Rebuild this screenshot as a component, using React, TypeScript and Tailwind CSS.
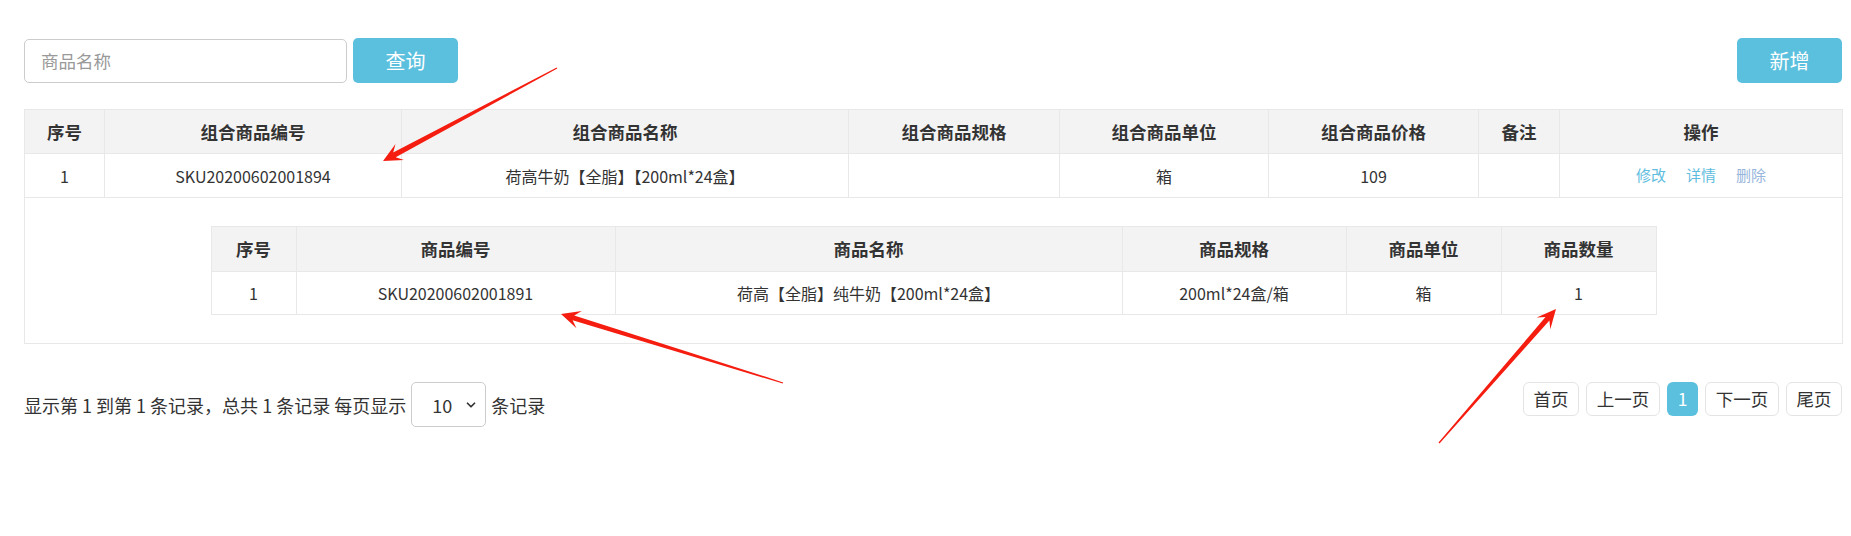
import React from "react";
import { ChevronDown } from "lucide-react";

function arrowPoints(tx: number, ty: number, px: number, py: number) {
  const dx = px - tx;
  const dy = py - ty;
  const len = Math.hypot(dx, dy);
  const ux = dx / len;
  const uy = dy / len;
  const nx = -uy;
  const ny = ux;
  const pt = (x: number, y: number) => `${x.toFixed(1)},${y.toFixed(1)}`;
  const jx = px - ux * 13;
  const jy = py - uy * 13;
  const wx = px - ux * 19;
  const wy = py - uy * 19;
  return [
    pt(tx + nx * 0.6, ty + ny * 0.6),
    pt(jx + nx * 2.6, jy + ny * 2.6),
    pt(wx + nx * 9, wy + ny * 9),
    pt(px, py),
    pt(wx - nx * 9, wy - ny * 9),
    pt(jx - nx * 2.6, jy - ny * 2.6),
    pt(tx - nx * 0.6, ty - ny * 0.6),
  ].join(" ");
}

const outerCols = [80, 297, 447, 211, 209, 210, 81, 283];
const outerHeads = ["序号", "组合商品编号", "组合商品名称", "组合商品规格", "组合商品单位", "组合商品价格", "备注", "操作"];
const innerCols = [85, 319, 507, 224, 155, 155];
const innerHeads = ["序号", "商品编号", "商品名称", "商品规格", "商品单位", "商品数量"];

export default function App() {
  return (
    <div className="relative w-[1851px] h-[536px] bg-white overflow-hidden font-['Noto_Sans_CJK_SC',sans-serif] text-[#333]">
      <div className="pl-[24px] pr-[9px] pt-[38px]">
        {/* top bar */}
        <div className="flex items-center justify-between">
          <div className="flex items-center gap-[6px]">
            <div className="w-[323px] h-[44px] mt-[1px] border border-[#cccccc] rounded-[5px] flex items-center px-[16px] text-[17.5px] text-[#999] leading-none">
              商品名称
            </div>
            <button className="w-[105px] h-[45px] rounded-[5px] bg-[#5bc0de] text-white text-[20px] leading-none">
              查询
            </button>
          </div>
          <button className="w-[105px] h-[45px] rounded-[5px] bg-[#5bc0de] text-white text-[20px] leading-none">
            新增
          </button>
        </div>

        {/* main table */}
        <table className="mt-[26px] table-fixed border-collapse w-[1818px] border border-[#e8e8e8]">
          <colgroup>
            {outerCols.map((w, i) => (
              <col key={i} style={{ width: w }} />
            ))}
          </colgroup>
          <thead>
            <tr className="bg-[#f3f3f3] h-[44px]">
              {outerHeads.map((h) => (
                <th key={h} className="border border-[#e8e8e8] text-[17.5px] font-bold text-center leading-none p-0">
                  {h}
                </th>
              ))}
            </tr>
          </thead>
          <tbody>
            <tr className="h-[44px] text-[16px]">
              <td className="border border-[#e8e8e8] text-center p-0">1</td>
              <td className="border border-[#e8e8e8] text-center p-0">SKU20200602001894</td>
              <td className="border border-[#e8e8e8] text-center p-0">荷高牛奶【全脂】【200ml*24盒】</td>
              <td className="border border-[#e8e8e8] text-center p-0"></td>
              <td className="border border-[#e8e8e8] text-center p-0">箱</td>
              <td className="border border-[#e8e8e8] text-center p-0">109</td>
              <td className="border border-[#e8e8e8] text-center p-0"></td>
              <td className="border border-[#e8e8e8] text-center p-0">
                <div className="flex justify-center gap-[20px] text-[15px]">
                  <span className="text-[#5fbde0]">修改</span>
                  <span className="text-[#5fbde0]">详情</span>
                  <span className="text-[#97b6dc]">删除</span>
                </div>
              </td>
            </tr>
            <tr>
              <td colSpan={8} className="border border-[#e8e8e8] py-[28px] px-0">
                <table className="table-fixed border-collapse w-[1445px] mx-auto border border-[#e8e8e8]">
                  <colgroup>
                    {innerCols.map((w, i) => (
                      <col key={i} style={{ width: w }} />
                    ))}
                  </colgroup>
                  <thead>
                    <tr className="bg-[#f3f3f3] h-[45px]">
                      {innerHeads.map((h) => (
                        <th key={h} className="border border-[#e8e8e8] text-[17.5px] font-bold text-center leading-none p-0">
                          {h}
                        </th>
                      ))}
                    </tr>
                  </thead>
                  <tbody>
                    <tr className="h-[43px] text-[16px]">
                      <td className="border border-[#e8e8e8] text-center p-0">1</td>
                      <td className="border border-[#e8e8e8] text-center p-0">SKU20200602001891</td>
                      <td className="border border-[#e8e8e8] text-center p-0">荷高【全脂】纯牛奶【200ml*24盒】</td>
                      <td className="border border-[#e8e8e8] text-center p-0">200ml*24盒/箱</td>
                      <td className="border border-[#e8e8e8] text-center p-0">箱</td>
                      <td className="border border-[#e8e8e8] text-center p-0">1</td>
                    </tr>
                  </tbody>
                </table>
              </td>
            </tr>
          </tbody>
        </table>

        {/* footer */}
        <div className="mt-[38px] flex items-start justify-between">
          <div className="flex items-center text-[18px] leading-none">
            <span>显示第 1 到第 1 条记录，总共 1 条记录 每页显示</span>
            <div className="ml-[5px] w-[75px] h-[45px] border border-[#cccccc] rounded-[5px] flex items-center pl-[20px] pr-[7px] justify-between">
              <span>10</span>
              <ChevronDown size={14} strokeWidth={3} className="text-[#333]" />
            </div>
            <span className="ml-[5px]">条记录</span>
          </div>
          <div className="flex items-center gap-[7px] text-[17.5px] leading-none">
            <div className="h-[34px] w-[56px] border border-[#e4e4e4] rounded-[6px] flex items-center justify-center">首页</div>
            <div className="h-[34px] w-[74px] border border-[#e4e4e4] rounded-[6px] flex items-center justify-center">上一页</div>
            <div className="h-[34px] w-[31px] rounded-[6px] bg-[#5bc0de] text-white flex items-center justify-center">1</div>
            <div className="h-[34px] w-[74px] border border-[#e4e4e4] rounded-[6px] flex items-center justify-center">下一页</div>
            <div className="h-[34px] w-[56px] border border-[#e4e4e4] rounded-[6px] flex items-center justify-center">尾页</div>
          </div>
        </div>
      </div>

      {/* annotation arrows */}
      <svg className="absolute inset-0 pointer-events-none" width="1851" height="536" viewBox="0 0 1851 536">
        <polygon points={arrowPoints(557, 68, 383, 161)} fill="#f51d10" />
        <polygon points={arrowPoints(783, 383, 561, 314)} fill="#f51d10" />
        <polygon points={arrowPoints(1439, 443, 1556, 309)} fill="#f51d10" />
      </svg>
    </div>
  );
}
